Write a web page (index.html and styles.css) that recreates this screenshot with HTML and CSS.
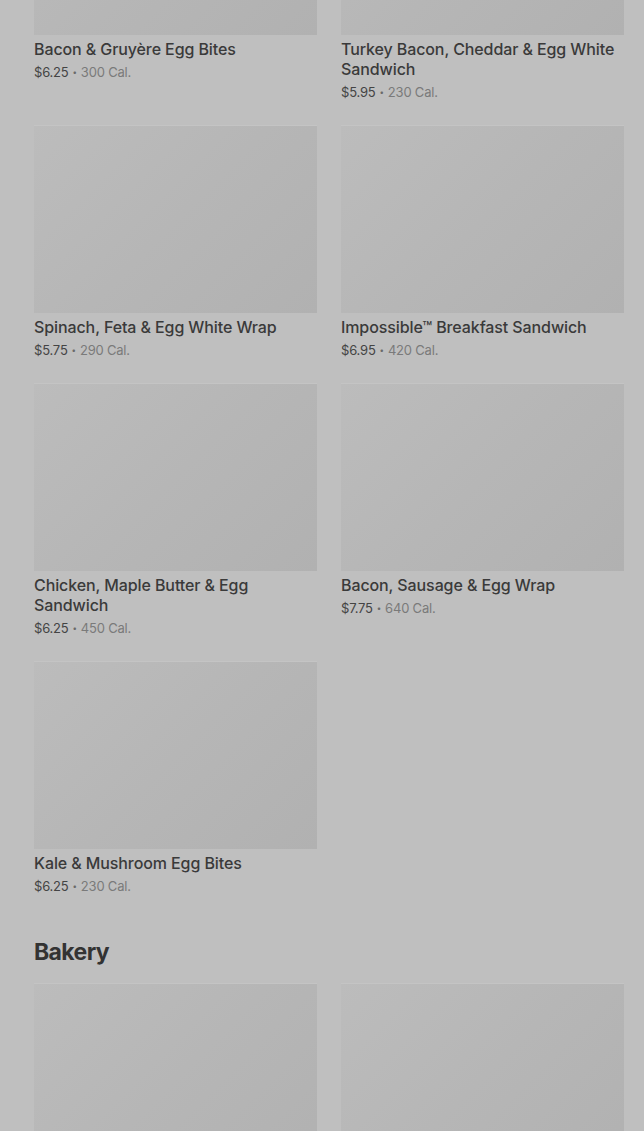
FILE: index.html
```html
<!DOCTYPE html>
<html lang="en">
<head>
<meta charset="utf-8">
<title>Menu</title>
<link rel="stylesheet" href="styles.css">
</head>
<body>
<main class="page">
  <section class="grid grid-first">
    <article class="card"><div class="thumb"></div><h3 class="name">Bacon &amp; Gruyère Egg Bites</h3><p class="meta"><span class="price">$6.25</span><span class="dot">•</span><span class="cal">300 Cal.</span></p></article>
    <article class="card"><div class="thumb"></div><h3 class="name">Turkey Bacon, Cheddar &amp; Egg White Sandwich</h3><p class="meta"><span class="price">$5.95</span><span class="dot">•</span><span class="cal">230 Cal.</span></p></article>
    <article class="card"><div class="thumb"></div><h3 class="name">Spinach, Feta &amp; Egg White Wrap</h3><p class="meta"><span class="price">$5.75</span><span class="dot">•</span><span class="cal">290 Cal.</span></p></article>
    <article class="card"><div class="thumb"></div><h3 class="name">Impossible™ Breakfast Sandwich</h3><p class="meta"><span class="price">$6.95</span><span class="dot">•</span><span class="cal">420 Cal.</span></p></article>
    <article class="card"><div class="thumb"></div><h3 class="name">Chicken, Maple Butter &amp; Egg Sandwich</h3><p class="meta"><span class="price">$6.25</span><span class="dot">•</span><span class="cal">450 Cal.</span></p></article>
    <article class="card"><div class="thumb"></div><h3 class="name">Bacon, Sausage &amp; Egg Wrap</h3><p class="meta"><span class="price">$7.75</span><span class="dot">•</span><span class="cal">640 Cal.</span></p></article>
    <article class="card"><div class="thumb"></div><h3 class="name">Kale &amp; Mushroom Egg Bites</h3><p class="meta"><span class="price">$6.25</span><span class="dot">•</span><span class="cal">230 Cal.</span></p></article>
  </section>
  <h2 class="section-title">Bakery</h2>
  <section class="grid">
    <article class="card"><div class="thumb"></div></article>
    <article class="card"><div class="thumb"></div></article>
  </section>
</main>
</body>
</html>
```
FILE: styles.css
```css
html, body {
  margin: 0;
  padding: 0;
  background: #bfbfbf;
  height: 1131px;
  overflow: hidden;
}
body {
  font-family: Inter, "Liberation Sans", sans-serif;
  color: #3a3a3a;
}
.page {
  padding: 0 20px 0 34px;
}
.grid {
  display: grid;
  grid-template-columns: 283px 283px;
  column-gap: 24px;
  row-gap: 23px;
}
.grid-first {
  margin-top: -153px;
}
.card {
  display: flex;
  flex-direction: column;
}
.thumb {
  height: 188px;
  background: linear-gradient(135deg, #bcbcbc 0%, #b6b6b6 50%, #b1b1b1 100%);
  border-top: 1px solid #c4c4c4;
  box-sizing: border-box;
}
.name {
  margin: 4px 0 0;
  font-size: 16px;
  line-height: 20px;
  font-weight: 500;
  letter-spacing: -0.1px;
  color: #3a3a3a;
}
.meta {
  margin: 3px 0 0;
  height: 20px;
  display: flex;
  align-items: center;
  font-size: 13px;
  line-height: 20px;
  letter-spacing: -0.2px;
}
.price {
  color: #444444;
}
.dot {
  color: #6a6a6a;
  font-size: 8px;
  margin: 0 4px;
}
.cal {
  color: #7a7a7a;
}
.section-title {
  margin: 44px 0 19px;
  font-size: 23px;
  line-height: 24px;
  font-weight: 700;
  letter-spacing: -0.6px;
  color: #333333;
}
```
